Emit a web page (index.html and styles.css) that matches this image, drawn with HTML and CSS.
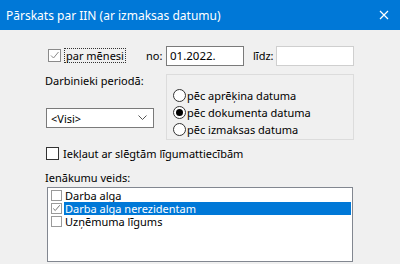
FILE: index.html
```html
<!DOCTYPE html>
<html>
<head>
<meta charset="utf-8">
<link rel="stylesheet" href="styles.css">
</head>
<body>
<div class="dialog">
  <div class="titlebar">
    <span class="title">Pārskats par IIN (ar izmaksas datumu)</span>
    <svg class="close" width="10" height="10" viewBox="0 0 10 10"><path d="M1 1L9 9M9 1L1 9" stroke="#fff" stroke-width="1.2"/></svg>
  </div>
  <div class="content">
    <div class="row1">
      <div class="chkwrap">
        <span class="chk chk-light"><svg width="11" height="11" viewBox="0 0 11 11"><path d="M2 5.5L4.5 8L9.5 2" fill="none" stroke="#8a8a8a" stroke-width="1"/></svg></span>
        <span class="focuslabel">par mēnesi</span>
      </div>
      <span class="lbl-no">no:</span>
      <div class="input input-dark">01.2022.</div>
      <span class="lbl-lidz">līdz:</span>
      <div class="input input-light"></div>
    </div>
    <div class="row2">
      <div class="leftcol">
        <div class="lbl-period">Darbinieki periodā:</div>
        <div class="combo"><span>&lt;Visi&gt;</span><svg width="9" height="6" viewBox="0 0 9 6"><path d="M0.5 0.5L4.5 4.5L8.5 0.5" fill="none" stroke="#555" stroke-width="1"/></svg></div>
      </div>
      <div class="group">
        <div class="radio-row"><span class="radio"></span><span>pēc aprēķina datuma</span></div>
        <div class="radio-row"><span class="radio on"></span><span>pēc dokumenta datuma</span></div>
        <div class="radio-row"><span class="radio"></span><span>pēc izmaksas datuma</span></div>
      </div>
    </div>
    <div class="row3">
      <span class="chk chk-dark"></span>
      <span>Iekļaut ar slēgtām līgumattiecībām</span>
    </div>
    <div class="lbl-income">Ienākumu veids:</div>
    <div class="listbox">
      <div class="item"><span class="lchk"></span><span class="itxt">Darba alga</span></div>
      <div class="item"><span class="lchk"><svg width="11" height="11" viewBox="0 0 11 11"><path d="M1.5 5.5L4 8L9.5 1.5" fill="none" stroke="#555" stroke-width="1"/></svg></span><span class="itxt sel">Darba alga nerezidentam</span></div>
      <div class="item"><span class="lchk"></span><span class="itxt">Uzņēmuma līgums</span></div>
    </div>
  </div>
</div>
</body>
</html>
```
FILE: styles.css
```css
* { box-sizing: border-box; }
html, body { margin: 0; padding: 0; }
body {
  width: 400px;
  height: 264px;
  overflow: hidden;
  background: #f0f0f0;
  font-family: "Noto Sans", "Open Sans", sans-serif;
  font-size: 11px;
  color: #000;
}
.dialog { width: 400px; height: 264px; background: #f0f0f0; }
.titlebar {
  height: 30px;
  background: #0078d7;
  display: flex;
  align-items: center;
  justify-content: space-between;
  padding: 0 11px 0 6px;
}
.title { color: #fff; font-size: 12px; }
.close { display: block; }

.content { padding: 15px 0 0 45px; }

.row1 { display: flex; align-items: center; height: 21px; }
.chkwrap { display: flex; align-items: center; width: 101px; padding-left: 3px; }
.chk {
  width: 13px; height: 13px; background: #fff;
  display: inline-flex; align-items: center; justify-content: center;
  flex: none;
}
.chk-light { border: 1px solid #8a8a8a; }
.chk-dark { border: 1px solid #333; }
.focuslabel {
  margin-left: 3px;
  padding: 0 1px;
  border: 1px dotted #333;
  line-height: 13px;
}
.lbl-no { width: 20px; }
.input {
  width: 78px; height: 20px; background: #fff;
  padding: 0 3px; line-height: 18px;
  font-size: 11.5px;
}
.input-dark { border: 1px solid #7a7a7a; }
.input-light { border: 1px solid #cfcfcf; }
.lbl-lidz { margin-left: 9px; width: 23px; }

.row2 { display: flex; margin-top: 8px; height: 66px; }
.leftcol { width: 121px; }
.lbl-period { line-height: 13px; }
.combo {
  margin-top: 21px; margin-left: 1px;
  width: 108px; height: 20px;
  background: #fff; border: 1px solid #7a7a7a;
  display: flex; align-items: center; justify-content: space-between;
  padding: 0 6px 0 4px;
}
.group {
  width: 188px; height: 66px;
  border: 1px solid #dcdcdc;
  padding: 12px 0 0 6px;
}
.radio-row { display: flex; align-items: center; height: 17px; }
.radio {
  width: 13px; height: 13px; border-radius: 50%;
  border: 1px solid #333; background: #fff;
  margin-right: 1px; position: relative; flex: none;
}
.radio.on::after {
  content: ""; position: absolute; left: 2px; top: 2px;
  width: 7px; height: 7px; border-radius: 50%; background: #000;
}

.row3 { display: flex; align-items: center; margin-top: 7px; height: 13px; padding-left: 1px; }
.row3 .chk { margin-right: 4px; }

.lbl-income { margin-top: 11px; line-height: 13px; }
.listbox {
  margin-top: 3px; margin-left: 2px;
  width: 306px; height: 75px;
  background: #fff; border: 1px solid #828790;
  padding: 1px 1px 0 3px;
}
.item { display: flex; align-items: center; height: 13px; }
.lchk {
  width: 11px; height: 11px; border: 1px solid #9a9a9a; background: #fff;
  display: inline-flex; align-items: center; justify-content: center; flex: none;
  margin-right: 2px;
}
.itxt { flex: 1; height: 13px; line-height: 13px; padding-left: 1px; }
.itxt.sel { background: #0078d7; color: #fff; }
```
